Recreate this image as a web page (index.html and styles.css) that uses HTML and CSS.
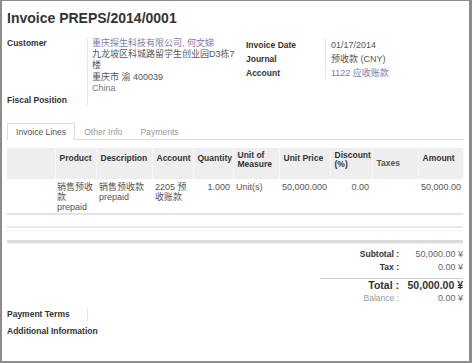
FILE: index.html
```html
<!DOCTYPE html>
<html lang="en">
<head>
  <meta charset="UTF-8" />
  <title>Invoice PREPS/2014/0001</title>
  <link rel="stylesheet" href="styles.css">
</head>
<body>
  <div class="sheet">
    <h1 class="title">Invoice PREPS/2014/0001</h1>

    <!-- Partner and invoice header fields -->
    <div class="head">
      <div class="group group-left">
        <div class="field">
          <div class="label">Customer</div>
          <div class="value">
            <a class="link" href="#">重庆探生科技有限公司, 何文娣</a><br>
            九龙坡区科城路留学生创业园D3栋7楼<br>
            重庆市 渝 400039<br>
            <span class="muted">China</span>
          </div>
        </div>
        <div class="field">
          <div class="label">Fiscal Position</div>
          <div class="value"></div>
        </div>
      </div>
      <div class="group group-right">
        <div class="field">
          <div class="label">Invoice Date</div>
          <div class="value">01/17/2014</div>
        </div>
        <div class="field">
          <div class="label">Journal</div>
          <div class="value">预收款 (CNY)</div>
        </div>
        <div class="field">
          <div class="label">Account</div>
          <div class="value"><a class="link" href="#">1122 应收账款</a></div>
        </div>
      </div>
    </div>

    <ul class="tabs">
      <li class="tab active">Invoice Lines</li>
      <li class="tab">Other Info</li>
      <li class="tab">Payments</li>
    </ul>

    <table class="lines">
      <colgroup>
        <col style="width:48px"><col style="width:41px"><col style="width:56px">
        <col style="width:41px"><col style="width:40px"><col style="width:46px">
        <col style="width:51px"><col style="width:42px"><col style="width:46px">
        <col style="width:45px">
      </colgroup>
      <thead>
        <tr>
          <th></th>
          <th>Product</th>
          <th>Description</th>
          <th>Account</th>
          <th>Quantity</th>
          <th class="two">Unit of Measure</th>
          <th>Unit Price</th>
          <th class="two">Discount (%)</th>
          <th class="plain">Taxes</th>
          <th>Amount</th>
        </tr>
      </thead>
      <tbody>
        <tr class="line">
          <td></td>
          <td class="prod">销售预收款 prepaid</td>
          <td>销售预收款<br>prepaid</td>
          <td>2205 预收账款</td>
          <td class="num">1.000</td>
          <td>Unit(s)</td>
          <td class="num">50,000.000</td>
          <td class="num">0.00</td>
          <td></td>
          <td class="num">50,000.00</td>
        </tr>
        <tr class="blank">
          <td colspan="10"></td>
        </tr>
      </tbody>
    </table>
    <div class="grid-foot"></div>

    <table class="totals">
      <tr><td class="tl">Subtotal :</td><td class="tv">50,000.00 ¥</td></tr>
      <tr class="tax"><td class="tl">Tax :</td><td class="tv">0.00 ¥</td></tr>
      <tr class="total"><td class="tl">Total :</td><td class="tv">50,000.00 ¥</td></tr>
      <tr class="balance"><td class="tl">Balance :</td><td class="tv">0.00 ¥</td></tr>
    </table>

    <div class="field terms">
      <div class="label">Payment Terms</div>
      <div class="value"></div>
    </div>
    <div class="field extra">
      <div class="label">Additional Information</div>
    </div>
  </div>
</body>
</html>
```

FILE: styles.css
```css
/* Page frame */
body {
  margin: 0;
  font-family: "Liberation Sans", "Noto Sans CJK SC", Arial, sans-serif;
  background: #fff;
}

.sheet {
  box-sizing: border-box;
  width: 472px;
  height: 363px;
  border: 2px solid #8d8d8d;
  border-top-width: 1px;
  border-right-width: 3px;
  padding: 7px 6px 0 5px;
  overflow: hidden;
}

.title {
  margin: 0;
  font-size: 14px;
  line-height: 20px;
  font-weight: bold;
  color: #333;
}

/* Header fields */
.head {
  display: flex;
  margin-top: 9.5px;
}

.field {
  display: flex;
}

.label {
  flex: none;
  width: 80px;
  font-size: 8.5px;
  font-weight: bold;
  color: #333;
}

.value {
  flex: 1;
  border-left: 1px solid #e8e8e8;
  padding-left: 4px;
  font-size: 9px;
  color: #555;
}

.link {
  color: #7c7bad;
  text-decoration: none;
}

.muted {
  color: #777;
}

.group-left {
  width: 234px;
}

.group-left .field {
  line-height: 11.4px;
}

.group-right {
  margin-left: 5px;
}

.group-right .field {
  line-height: 14px;
}

.group-right .label {
  width: 79px;
}

.group-right .value {
  padding-left: 5px;
}

/* Notebook tabs */
.tabs {
  display: flex;
  list-style: none;
  margin: 17px 0 0;
  padding: 0;
  border-bottom: 1px solid #ddd;
}

.tab {
  padding: 1px 8px;
  line-height: 14px;
  font-size: 8.6px;
  color: #999;
  border: 1px solid transparent;
  border-bottom: 0;
  margin-bottom: -1px;
}

.tab.active {
  color: #555;
  border-color: #ddd;
  background: #fff;
}

/* Invoice lines grid */
.lines {
  width: 456px;
  margin-top: 8px;
  table-layout: fixed;
  border-collapse: collapse;
}

.lines thead tr {
  height: 31px;
}

.lines th {
  background: #eee;
  border-right: 1px solid #f6f6f6;
  padding: 0 2px 9px 4px;
  text-align: left;
  vertical-align: middle;
  font-size: 8.5px;
  line-height: 9.5px;
  font-weight: bold;
  color: #333;
}

.lines th.two {
  padding-bottom: 6px;
}

.lines th.plain {
  padding-bottom: 0;
  color: #555;
}

.lines td {
  padding: 3px 3px 1px 3px;
  vertical-align: top;
  font-size: 9px;
  line-height: 10px;
  color: #555;
}

.lines td.prod {
  padding: 3px 0 1px 2px;
}

.lines td.num {
  text-align: right;
}

.lines .line td {
  border-bottom: 2px solid #e4e4e4;
}

.lines .blank td {
  height: 11px;
  padding: 0;
  border-bottom: 2px solid #e8e8e8;
}

.grid-foot {
  width: 456px;
  height: 9px;
  margin-top: 2px;
  border-top: 1px solid #f0f0f0;
  border-bottom: 3px solid #dcdcdc;
  box-shadow: 0 1px 0 #eee;
}

/* Totals */
.totals {
  width: 143px;
  margin: 5px 0 0 auto;
  border-collapse: collapse;
}

.totals td {
  padding: 0;
  line-height: 13px;
  font-size: 9px;
  text-align: right;
}

.totals .tl {
  width: 79px;
  font-size: 8.5px;
  font-weight: bold;
  color: #333;
}

.totals .tv {
  color: #666;
}

.totals .tax td {
  padding-bottom: 4px;
}

.totals .total td {
  border-top: 1px solid #ccc;
  font-size: 10.5px;
  font-weight: bold;
  color: #333;
}

.totals .balance .tl {
  font-weight: normal;
  color: #999;
}

/* Bottom fields */
.terms {
  margin-top: 3.5px;
  line-height: 13px;
}

.terms .value {
  flex: none;
  width: 1px;
  padding: 0;
}

.extra {
  margin-top: 4px;
  line-height: 13px;
}

.extra .label {
  width: auto;
}
```
